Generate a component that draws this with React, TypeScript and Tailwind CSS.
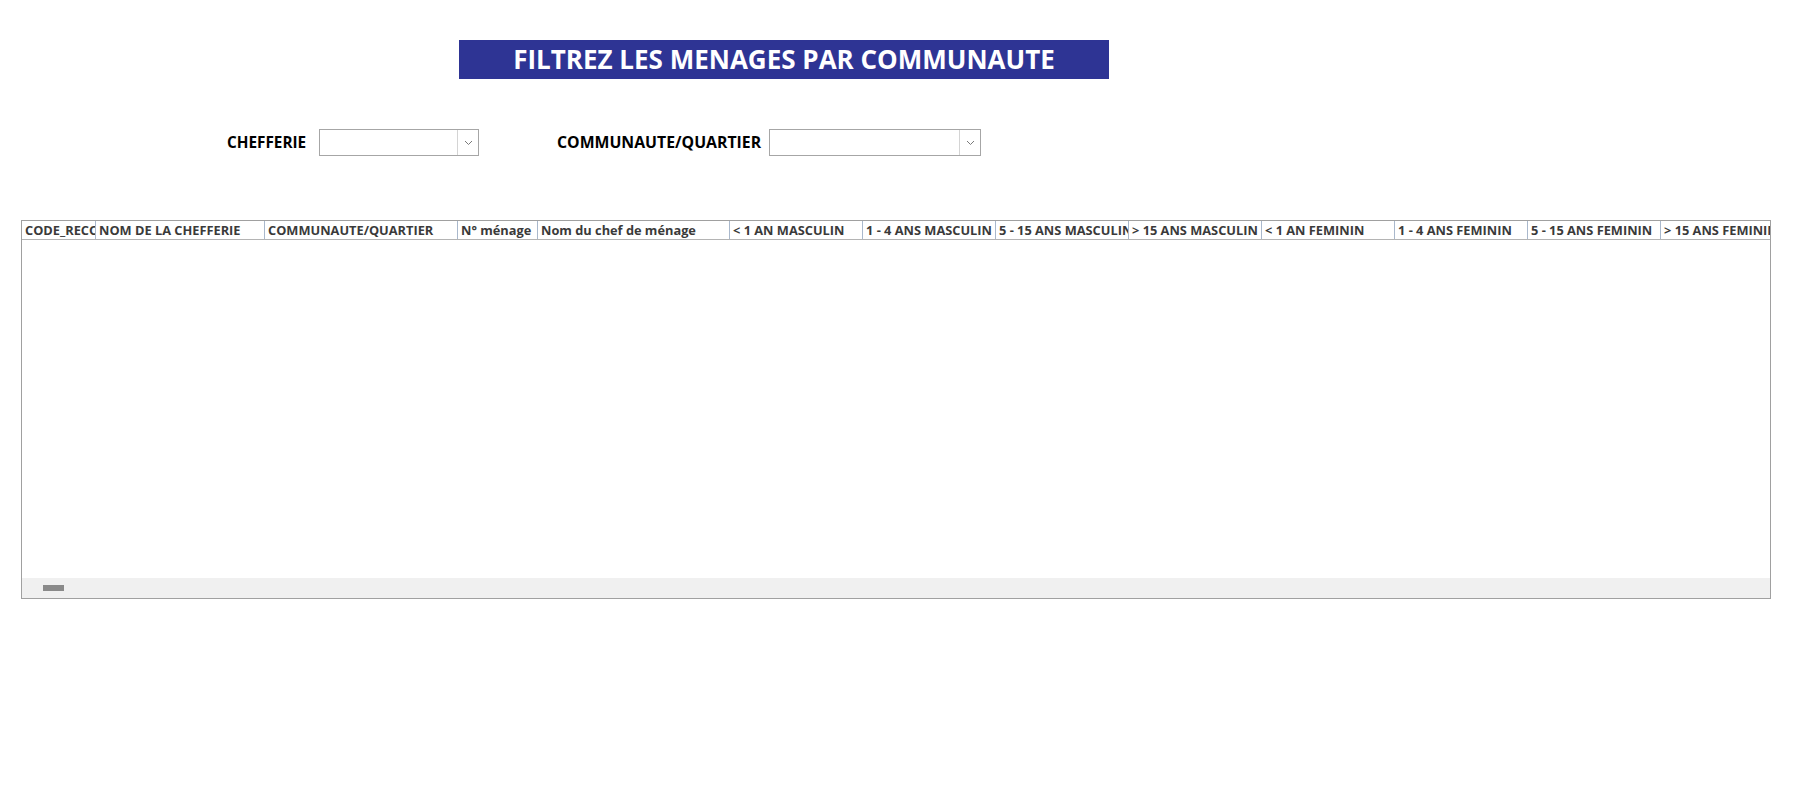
import React from "react";

const columns = [
  { label: "CODE_RECO", w: "w-[74px]" },
  { label: "NOM DE LA CHEFFERIE", w: "w-[169px]" },
  { label: "COMMUNAUTE/QUARTIER", w: "w-[193px]" },
  { label: "N° ménage", w: "w-[80px]" },
  { label: "Nom du chef de ménage", w: "w-[192px]" },
  { label: "< 1 AN MASCULIN", w: "w-[133px]" },
  { label: "1 - 4 ANS MASCULIN", w: "w-[133px]" },
  { label: "5 - 15 ANS MASCULIN", w: "w-[133px]" },
  { label: "> 15 ANS MASCULIN", w: "w-[133px]" },
  { label: "< 1 AN FEMININ", w: "w-[133px]" },
  { label: "1 - 4 ANS FEMININ", w: "w-[133px]" },
  { label: "5 - 15 ANS FEMININ", w: "w-[133px]" },
  { label: "> 15 ANS FEMININ", w: "w-[133px]" },
];

function Chevron() {
  return (
    <svg width="9" height="6" viewBox="0 0 9 6" fill="none">
      <path d="M1 1L4.5 4.5L8 1" stroke="#7a7a7a" strokeWidth="1" />
    </svg>
  );
}

function ComboBox({ width }: { width: string }) {
  return (
    <div className={`flex h-[27px] ${width} border border-[#a6a6a6] bg-white`}>
      <div className="flex-1" />
      <div className="flex w-[21px] items-center justify-center border-l border-[#d4d4d4] bg-white">
        <Chevron />
      </div>
    </div>
  );
}

export default function App() {
  return (
    <div
      className="min-h-[812px] w-[1817px] overflow-hidden bg-white"
      style={{ fontFamily: '"Open Sans", "Noto Sans", sans-serif' }}
    >
      <div className="pt-[40px] pl-[459px]">
        <div className="flex h-[39px] w-[650px] items-center justify-center bg-[#2e3494]">
          <h1 className="text-[26px] font-bold text-white">FILTREZ LES MENAGES PAR COMMUNAUTE</h1>
        </div>
      </div>

      <div className="mt-[50px] flex items-center pl-[227px]">
        <span className="w-[92px] whitespace-nowrap text-[15.3px] font-bold text-black">CHEFFERIE</span>
        <ComboBox width="w-[160px]" />
        <span className="ml-[78px] w-[212px] whitespace-nowrap text-[15.8px] font-bold text-black">
          COMMUNAUTE/QUARTIER
        </span>
        <ComboBox width="w-[212px]" />
      </div>

      <div className="mt-[64px] ml-[21px] flex h-[379px] w-[1750px] flex-col border border-[#a0a0a0] bg-white">
        <div className="flex h-[19px] shrink-0 overflow-hidden border-b border-[#b4b4b4]">
          {columns.map((c) => (
            <div
              key={c.label}
              className={`${c.w} shrink-0 overflow-hidden whitespace-nowrap border-r border-[#a9b8cc] pl-[3px] text-[12.8px] leading-[18px] font-bold text-[#3a3a3a]`}
            >
              {c.label}
            </div>
          ))}
        </div>
        <div className="flex-1" />
        <div className="flex h-[20px] shrink-0 items-center bg-[#f0f0f0] pl-[21px]">
          <div className="h-[6px] w-[21px] bg-[#8a8a8a]" />
        </div>
      </div>
    </div>
  );
}
